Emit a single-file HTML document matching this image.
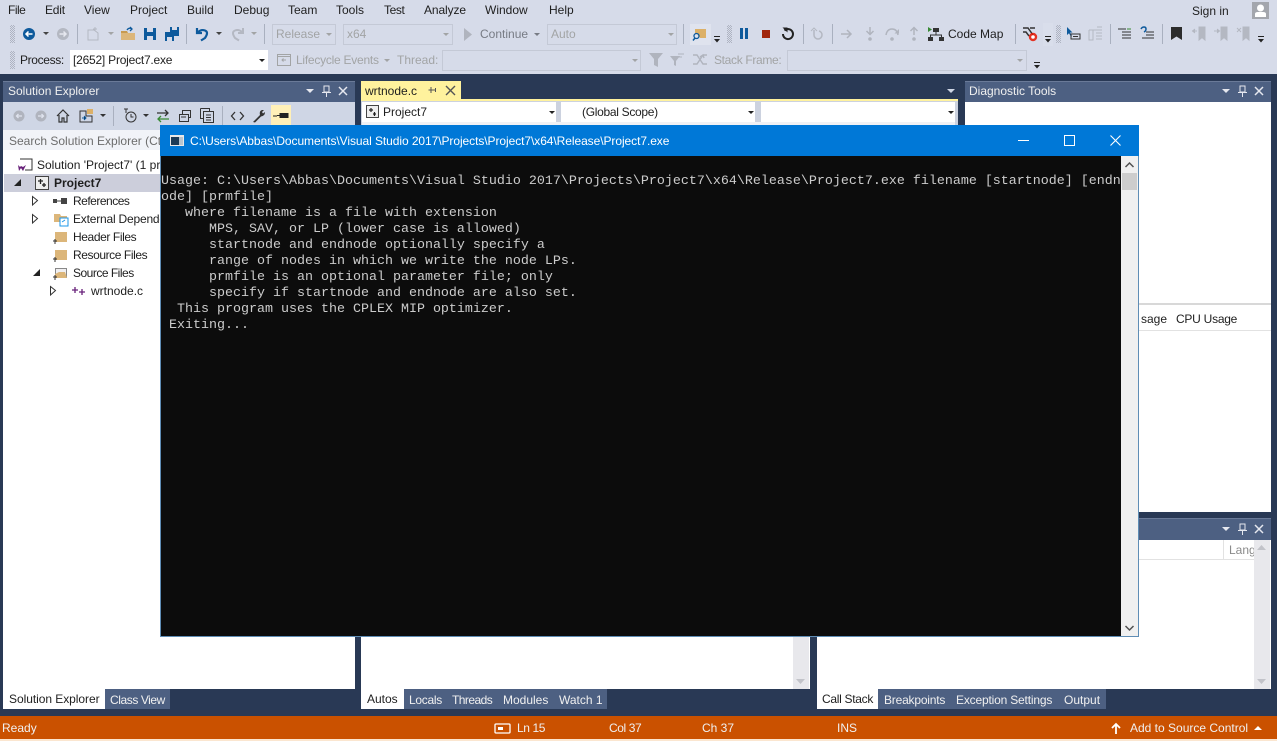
<!DOCTYPE html>
<html><head><meta charset="utf-8"><title>Visual Studio</title>
<style>
html,body{margin:0;padding:0;background:#293955;}
#r{position:relative;width:1277px;height:741px;overflow:hidden;background:#293955;font:12px/16px "Liberation Sans",sans-serif;color:#1e1e1e;}
.b{position:absolute;}
.t{position:absolute;white-space:nowrap;line-height:16px;}
.g{color:#a2a4a5;}
.w{color:#fff;}
.l{color:#f0f0f0;}
.c{position:absolute;background:#d6dbe9;border:1px solid #c4c9d6;box-sizing:border-box;}
.sep{position:absolute;width:1px;height:20px;background:#a9b0bf;}
.grip{position:absolute;width:5px;background-image:conic-gradient(#aeb3c1 25%,transparent 0 50%,#aeb3c1 0 75%,transparent 0);background-size:2px 2px;}
.title{position:absolute;background:#4d6082;height:21px;border-top:1px solid #6a7a98;box-sizing:border-box;}
.tab{position:absolute;top:689px;height:20px;background:#4d6082;}
.tabw{position:absolute;top:689px;height:20px;background:#fff;}
svg{position:absolute;overflow:visible;}
pre{position:absolute;margin:0;font:13.33px/16px "Liberation Mono",monospace;color:#cccccc;white-space:pre;}
</style></head><body><div id="r">

<!-- chrome -->
<div class="b" style="left:0;top:0;width:1277px;height:74px;background:#d6dbe9"></div>

<!-- menu -->
<span class="t" style="left:8px;top:2px;letter-spacing:-.5px">File</span>
<span class="t" style="left:45px;top:2px;letter-spacing:-.2px">Edit</span>
<span class="t" style="left:84px;top:2px">View</span>
<span class="t" style="left:130px;top:2px">Project</span>
<span class="t" style="left:187px;top:2px">Build</span>
<span class="t" style="left:234px;top:2px">Debug</span>
<span class="t" style="left:288px;top:2px">Team</span>
<span class="t" style="left:336px;top:2px">Tools</span>
<span class="t" style="left:384px;top:2px;letter-spacing:-.4px">Test</span>
<span class="t" style="left:424px;top:2px;letter-spacing:-.1px">Analyze</span>
<span class="t" style="left:485px;top:2px">Window</span>
<span class="t" style="left:549px;top:2px">Help</span>
<span class="t" style="left:1192px;top:3px">Sign in</span>
<div class="b" style="left:1252px;top:2px;width:17px;height:17px;background:#a3a6ad"></div>
<svg style="left:1252px;top:2px" width="17" height="17"><circle cx="8.5" cy="6" r="3.5" fill="#fff"/><path d="M3 15v-3q0-2 3-2h5q3 0 3 2v3z" fill="#fff"/></svg>

<!-- toolbar 1 -->
<div class="grip" style="left:10px;top:25px;height:18px"></div>
<svg style="left:22px;top:27px" width="14" height="14"><circle cx="7" cy="7" r="6" fill="#0e5a9c"/><path d="M10.500 7H4M6.500 4.500L4 7l2.500 2.500" stroke="#fff" stroke-width="1.500" fill="none"/></svg>
<svg style="left:43px;top:32px" width="7" height="4"><path d="M0 0h6L3 3z" fill="#444"/></svg>
<svg style="left:56px;top:27px" width="14" height="14"><circle cx="7" cy="7" r="6" fill="#b4b8c2"/><path d="M3.500 7H10M7.500 4.500L10 7l-2.500 2.500" stroke="#e6e8ef" stroke-width="1.500" fill="none"/></svg>
<div class="sep" style="left:77px;top:24px"></div>
<svg style="left:87px;top:27px" width="13" height="14"><path d="M1 3h6l4 3v7H1z" fill="none" stroke="#b4b8c2"/><path d="M8 0v4M6 2h4" stroke="#b4b8c2"/></svg>
<svg style="left:108px;top:32px" width="7" height="4"><path d="M0 0h6L3 3z" fill="#a2a4a5"/></svg>
<svg style="left:121px;top:27px" width="15" height="14"><path d="M0 6h14v7H0z" fill="#dcb67a"/><path d="M0 6V4h6l1 2z" fill="#c89a50"/><path d="M6 3q2-3 5-1M9 0l2 2-2 2" stroke="#0e5a9c" stroke-width="1.300" fill="none"/></svg>
<svg style="left:144px;top:28px" width="12" height="12"><path d="M0 0h12v12H0z" fill="#0e5a9c"/><path d="M3 0h6v4H3zM3 8h6v4H3z" fill="#d6dbe9"/></svg>
<svg style="left:165px;top:27px" width="14" height="14"><path d="M0 5h9v9H0z" fill="#0e5a9c"/><path d="M5 0h9v9H5z" fill="#0e5a9c"/><path d="M7 0h5v3H7zM2 10h5v4H2z" fill="#d6dbe9"/></svg>
<div class="sep" style="left:186px;top:24px"></div>
<svg style="left:195px;top:27px" width="14" height="14"><path d="M2 1v5h5M2.500 5.500Q6 2 10 3.500T10 11L6 13.500" stroke="#0e5a9c" stroke-width="2.200" fill="none"/></svg>
<svg style="left:216px;top:32px" width="7" height="4"><path d="M0 0h6L3 3z" fill="#444"/></svg>
<svg style="left:231px;top:27px" width="14" height="14"><path d="M12 1v5H7M11.500 5.500Q8 2 4 3.500T4 11l4 2.500" stroke="#b4b8c2" stroke-width="2" fill="none"/></svg>
<svg style="left:251px;top:32px" width="7" height="4"><path d="M0 0h6L3 3z" fill="#a2a4a5"/></svg>
<div class="sep" style="left:264px;top:24px"></div>
<div class="c" style="left:272px;top:24px;width:64px;height:21px"></div>
<span class="t g" style="left:276px;top:26px">Release</span>
<svg style="left:326px;top:33px" width="7" height="4"><path d="M0 0h6L3 3z" fill="#a2a4a5"/></svg>
<div class="c" style="left:343px;top:24px;width:110px;height:21px"></div>
<span class="t g" style="left:347px;top:26px">x64</span>
<svg style="left:443px;top:33px" width="7" height="4"><path d="M0 0h6L3 3z" fill="#a2a4a5"/></svg>
<svg style="left:463px;top:28px" width="10" height="13"><path d="M1 0l8 6.500-8 6.500z" fill="#b0b4be"/></svg>
<span class="t" style="left:480px;top:26px;color:#777b84">Continue</span>
<svg style="left:534px;top:33px" width="7" height="4"><path d="M0 0h6L3 3z" fill="#777b84"/></svg>
<div class="c" style="left:547px;top:24px;width:130px;height:21px"></div>
<span class="t g" style="left:551px;top:26px">Auto</span>
<svg style="left:668px;top:33px" width="7" height="4"><path d="M0 0h6L3 3z" fill="#a2a4a5"/></svg>
<div class="sep" style="left:683px;top:24px"></div>
<div class="b" style="left:690px;top:24px;width:21px;height:21px;background:#dfe3ee"></div>
<svg style="left:692px;top:27px" width="15" height="14"><path d="M3 2h11v9H8L5 7H3z" fill="#dcb067"/><circle cx="4.500" cy="9" r="2.500" fill="none" stroke="#0e5a9c" stroke-width="1.300"/><path d="M3 11l-2 2.500" stroke="#0e5a9c" stroke-width="1.500"/></svg>
<svg style="left:713px;top:36px" width="8" height="7"><path d="M1 .5h6" stroke="#222"/><path d="M1 3h6L4 6.500z" fill="#222"/></svg>
<div class="grip" style="left:727px;top:25px;height:18px"></div>
<svg style="left:739px;top:28px" width="10" height="11"><path d="M1 0h3v11H1zM6 0h3v11H6z" fill="#0e5a9c"/></svg>
<div class="b" style="left:762px;top:30px;width:8px;height:8px;background:#a1260d"></div>
<svg style="left:781px;top:27px" width="14" height="14"><path d="M3.500 3.500A5 5 0 1 1 2 7" stroke="#222" stroke-width="2" fill="none"/><path d="M1.500 0.500h5v5z" fill="#222"/></svg>
<div class="sep" style="left:803px;top:24px"></div>
<svg style="left:811px;top:27px" width="14" height="14"><path d="M3 3v5a4 4 0 0 0 8 0 4 4 0 0 0-3-4" stroke="#b4b8c2" stroke-width="1.500" fill="none"/><path d="M0 4l3-3 3 3" stroke="#b4b8c2" fill="none"/></svg>
<div class="sep" style="left:832px;top:24px"></div>
<svg style="left:841px;top:28px" width="12" height="12"><path d="M0 6h10M6 2l4 4-4 4" stroke="#b0b4be" stroke-width="1.500" fill="none"/></svg>
<svg style="left:864px;top:27px" width="12" height="14"><path d="M6 0v7M2.500 4L6 7.500 9.500 4" stroke="#b0b4be" stroke-width="1.500" fill="none"/><circle cx="6" cy="12" r="1.800" fill="#b0b4be"/></svg>
<svg style="left:885px;top:27px" width="14" height="14"><path d="M1 8Q2 2 7 2t6 6" stroke="#b0b4be" stroke-width="1.500" fill="none"/><path d="M9.500 6.500h4.500V2" fill="#b0b4be"/><circle cx="7" cy="12" r="1.800" fill="#b0b4be"/></svg>
<svg style="left:908px;top:27px" width="12" height="14"><path d="M6 8V1M2.500 4L6 .5 9.500 4" stroke="#b0b4be" stroke-width="1.500" fill="none"/><circle cx="6" cy="12" r="1.800" fill="#b0b4be"/></svg>
<svg style="left:928px;top:27px" width="16" height="14"><path d="M5 1h6v4H5zM0 10h5v4H0zM11 10h5v4h-5z" fill="#333"/><path d="M8 5v3M2.500 10V8h11v2" stroke="#333" fill="none"/><path d="M0 0l4 2.500L0 5z" fill="#388a34"/></svg>
<span class="t" style="left:948px;top:26px">Code Map</span>
<div class="sep" style="left:1015px;top:24px"></div>
<svg style="left:1022px;top:26px" width="16" height="16"><path d="M1 2h5l5 7M1 6h3l3 4M8 2h5" stroke="#333" stroke-width="1.500" fill="none"/><circle cx="11" cy="11" r="4.200" fill="#e51400" opacity=".85"/><circle cx="11" cy="11" r="1.800" fill="#fff"/></svg>
<div class="b" style="left:1043px;top:23px;width:10px;height:23px;background:#dfe3ee;opacity:.4"></div>
<svg style="left:1044px;top:36px" width="8" height="7"><path d="M1 .5h6" stroke="#222"/><path d="M1 3h6L4 6.500z" fill="#222"/></svg>
<div class="grip" style="left:1056px;top:25px;height:18px"></div>
<svg style="left:1066px;top:27px" width="15" height="14"><path d="M1 0v8l2-1.800 2 3.500 1-.6L4 5.500h2.500z" fill="#0e5a9c"/><path d="M5 7h9v5H5zM7 9.500h5" stroke="#333" fill="none"/></svg>
<svg style="left:1088px;top:27px" width="15" height="14"><path d="M1 3h13M1 3v10h4V3M8 6h6M8 9h6M8 12h6M9 0h5" stroke="#b4b8c2" fill="none"/></svg>
<div class="sep" style="left:1110px;top:24px"></div>
<svg style="left:1118px;top:28px" width="14" height="12"><path d="M0 1h8M4 4h9M4 7h9M4 10h9" stroke="#333" fill="none"/><path d="M9 1h4" stroke="#388a34"/></svg>
<svg style="left:1140px;top:27px" width="14" height="13"><path d="M1 2q1-2 3-2t2 2-2 3" stroke="#0e5a9c" stroke-width="1.500" fill="none"/><path d="M6 5h8M6 8h8M2 11h12" stroke="#333" fill="none"/></svg>
<div class="sep" style="left:1162px;top:24px"></div>
<svg style="left:1171px;top:27px" width="11" height="13"><path d="M0 0h11v13L5.500 9.500 0 13z" fill="#2c2c2c"/></svg>
<svg style="left:1192px;top:27px" width="14" height="13"><path d="M7 0h6v13l-3-2.500L7 13zM0 4h5M3 2L.5 4 3 6" stroke="#b4b8c2" fill="#b4b8c2"/></svg>
<svg style="left:1214px;top:27px" width="14" height="13"><path d="M7 0h6v13l-3-2.500L7 13zM0 4h5M3 2l2.500 2L3 6" stroke="#b4b8c2" fill="#b4b8c2"/></svg>
<svg style="left:1236px;top:27px" width="14" height="13"><path d="M7 0h6v13l-3-2.500L7 13zM1 1l4 4M5 1L1 5" stroke="#b4b8c2" fill="#b4b8c2"/></svg>
<svg style="left:1257px;top:36px" width="8" height="7"><path d="M1 .5h6" stroke="#222"/><path d="M1 3h6L4 6.500z" fill="#222"/></svg>

<!-- toolbar 2 -->
<div class="grip" style="left:10px;top:51px;height:18px"></div>
<span class="t" style="left:20px;top:52px;letter-spacing:-.35px">Process:</span>
<div class="b" style="left:70px;top:50px;width:198px;height:20px;background:#fff"></div>
<span class="t" style="left:73px;top:52px;letter-spacing:-.22px">[2652] Project7.exe</span>
<svg style="left:259px;top:59px" width="7" height="4"><path d="M0 0h6L3 3z" fill="#222"/></svg>
<svg style="left:277px;top:54px" width="14" height="12"><path d="M.5.500h13v11H.5z" fill="none" stroke="#a2a4a5"/><path d="M.5 2.500h13M9 6H5M6.500 4.500L5 6l1.500 1.500" stroke="#a2a4a5" fill="none"/></svg>
<span class="t g" style="left:296px;top:52px;letter-spacing:-.25px">Lifecycle Events</span>
<svg style="left:384px;top:59px" width="7" height="4"><path d="M0 0h6L3 3z" fill="#a2a4a5"/></svg>
<span class="t g" style="left:397px;top:52px">Thread:</span>
<div class="c" style="left:442px;top:50px;width:199px;height:21px"></div>
<svg style="left:632px;top:59px" width="7" height="4"><path d="M0 0h6L3 3z" fill="#a2a4a5"/></svg>
<svg style="left:649px;top:53px" width="14" height="14"><path d="M0 0h14L9 6v8l-4-2V6z" fill="#b0b4be"/></svg>
<svg style="left:670px;top:53px" width="14" height="14"><path d="M0 3h10L6 8v5l-2-1V8z" fill="#b0b4be"/><path d="M8 1h6M8 4h4" stroke="#b0b4be"/></svg>
<svg style="left:693px;top:54px" width="14" height="12"><path d="M0 1h4l6 9h4M0 10h4l6-9h4M7 3l3-2 1 3" stroke="#b0b4be" stroke-width="1.400" fill="none"/></svg>
<span class="t g" style="left:714px;top:52px;letter-spacing:-.33px">Stack Frame:</span>
<div class="c" style="left:787px;top:50px;width:240px;height:21px"></div>
<svg style="left:1017px;top:59px" width="7" height="4"><path d="M0 0h6L3 3z" fill="#a2a4a5"/></svg>
<svg style="left:1033px;top:62px" width="8" height="7"><path d="M1 .5h6" stroke="#222"/><path d="M1 3h6L4 6.500z" fill="#222"/></svg>

<!-- Solution Explorer panel -->
<div class="b" style="left:3px;top:81px;width:352px;height:608px;background:#fff"></div>
<div class="title" style="left:3px;top:81px;width:352px"></div>
<span class="t l" style="left:8px;top:83px">Solution Explorer</span>
<svg style="left:306px;top:89px" width="8" height="5"><path d="M0 0h8L4 4z" fill="#e6e8ef"/></svg>
<svg style="left:322px;top:85px" width="9" height="13"><path d="M2 1h5v6H2zM0 7.500h9M4.500 8v4" stroke="#e6e8ef" fill="none"/></svg>
<svg style="left:338px;top:86px" width="10" height="10"><path d="M1 1l8 8M9 1L1 9" stroke="#e6e8ef" stroke-width="1.500"/></svg>

<div class="b" style="left:3px;top:102px;width:352px;height:28px;background:#cfd6e5"></div>
<svg style="left:13px;top:110px" width="12" height="12"><circle cx="6" cy="6" r="5.500" fill="#b0b4be"/><path d="M9 6H3.500M5.500 4L3.500 6l2 2" stroke="#dfe3ee" stroke-width="1.300" fill="none"/></svg>
<svg style="left:35px;top:110px" width="12" height="12"><circle cx="6" cy="6" r="5.500" fill="#b0b4be"/><path d="M3 6h5.500M6.500 4l2 2-2 2" stroke="#dfe3ee" stroke-width="1.300" fill="none"/></svg>
<svg style="left:56px;top:109px" width="14" height="14"><path d="M1 7l6-6 6 6M3 6v7h3V9h2v4h3V6" stroke="#333" stroke-width="1.200" fill="none"/></svg>
<svg style="left:79px;top:108px" width="15" height="15"><path d="M1 3h6v5h6v6H1z" fill="none" stroke="#333"/><path d="M8 1h6v5H8z" fill="#dcb067"/><path d="M3 10h4M5 8l2 2-2 2" stroke="#0e5a9c"/></svg>
<svg style="left:100px;top:114px" width="7" height="4"><path d="M0 0h6L3 3z" fill="#333"/></svg>
<div class="sep" style="left:113px;top:106px"></div>
<svg style="left:123px;top:108px" width="15" height="15"><circle cx="8" cy="9" r="5" fill="none" stroke="#333"/><path d="M8 6v3h2.500M1 1h4M3 1v4" stroke="#333" fill="none"/></svg>
<svg style="left:143px;top:114px" width="7" height="4"><path d="M0 0h6L3 3z" fill="#333"/></svg>
<svg style="left:156px;top:109px" width="14" height="14"><path d="M1 4h11M9 1l3 3-3 3" stroke="#333" stroke-width="1.300" fill="none"/><path d="M13 10H2M5 7l-3 3 3 3" stroke="#388a34" stroke-width="1.300" fill="none"/></svg>
<svg style="left:179px;top:110px" width="12" height="12"><path d="M3 4h6v7H0V4zM3 4V0h8v7H9" stroke="#333" fill="none" transform="translate(.5 .5)"/><path d="M2 7h5" stroke="#333"/></svg>
<svg style="left:200px;top:108px" width="14" height="15"><path d="M3.500 3.500h10v11h-10zM.5 .5h9v3M.5 .5v10h3M6 7h5M6 9.500h5M6 12h5" stroke="#333" fill="none"/></svg>
<div class="sep" style="left:222px;top:106px"></div>
<svg style="left:231px;top:111px" width="13" height="10"><path d="M4 1L0.500 5 4 9M9 1l3.500 4L9 9" stroke="#333" stroke-width="1.300" fill="none"/></svg>
<svg style="left:252px;top:109px" width="14" height="14"><path d="M1 13l7-7Q7 2 10 1l2 0-2 2 1 1.500L13 3q0 4-4 4.500L3 13.500z" fill="#333"/></svg>
<div class="b" style="left:271px;top:105px;width:20px;height:22px;background:#fff0b8"></div>
<svg style="left:273px;top:112px" width="16" height="8"><path d="M0 4h4v0M4 3.500h11M7 1.500h8v4H7z" stroke="#222" fill="#222"/></svg>

<div class="b" style="left:3px;top:130px;width:352px;height:20px;background:#f1f3f8"></div>
<span class="t" style="left:9px;top:133px;color:#6d6d6d">Search Solution Explorer (Ctrl+;)</span>

<svg style="left:18px;top:158px" width="15" height="14"><path d="M2 1h12v11H7" fill="none" stroke="#333"/><path d="M0 7l1 6 2-3 2 3 3-6-3 2-2-1-1 1z" fill="#68217a"/></svg>
<span class="t" style="left:37px;top:157px">Solution 'Project7' (1 project)</span>
<div class="b" style="left:4px;top:174px;width:351px;height:18px;background:#ccceDb"></div>
<svg style="left:14px;top:179px" width="8" height="8"><path d="M7 0v7H0z" fill="#222"/></svg>
<svg style="left:35px;top:176px" width="14" height="14"><rect x=".5" y=".5" width="13" height="13" fill="#eee" stroke="#444"/><path d="M3 5h5M5.500 3v5M7 9h4M9 7v4" stroke="#222" stroke-width="1.300"/></svg>
<span class="t" style="left:54px;top:175px;font-weight:bold">Project7</span>
<svg style="left:32px;top:196px" width="7" height="10"><path d="M.5.500l5 4-5 4.500z" fill="none" stroke="#333"/></svg>
<svg style="left:53px;top:198px" width="14" height="6"><path d="M0 1h4v4H0z" fill="#444"/><path d="M4 3h4" stroke="#444"/><path d="M8 0h6v6H8z" fill="#444"/></svg>
<span class="t" style="left:73px;top:193px;letter-spacing:-.5px">References</span>
<svg style="left:32px;top:214px" width="7" height="10"><path d="M.5.500l5 4-5 4.500z" fill="none" stroke="#333"/></svg>
<svg style="left:54px;top:212px" width="14" height="14"><path d="M0 2h6l1 2h6v6H0z" fill="#dcb67a"/><path d="M6 6h8v8H6z" fill="#fff" stroke="#1c97ea"/><path d="M8 10l3-2" stroke="#1c97ea"/></svg>
<span class="t" style="left:73px;top:211px;letter-spacing:-.2px">External Dependencies</span>
<svg style="left:53px;top:231px" width="14" height="13"><path d="M2 1h12v10H2z" fill="#dcb67a"/><path d="M0 10h4M2 8v5" stroke="#333"/></svg>
<span class="t" style="left:73px;top:229px;letter-spacing:-.4px">Header Files</span>
<svg style="left:53px;top:249px" width="14" height="13"><path d="M2 1h12v10H2z" fill="#dcb67a"/><path d="M0 10h4M2 8v5" stroke="#333"/></svg>
<span class="t" style="left:73px;top:247px;letter-spacing:-.42px">Resource Files</span>
<svg style="left:33px;top:269px" width="8" height="8"><path d="M7 0v7H0z" fill="#222"/></svg>
<svg style="left:53px;top:267px" width="14" height="13"><path d="M2.500 1.500h11v9h-11z" fill="#f0eff1" stroke="#888"/><path d="M2 7l4-2h6l2 6H2z" fill="#dcb67a"/><path d="M0 10h4M2 8v5" stroke="#333"/></svg>
<span class="t" style="left:73px;top:265px;letter-spacing:-.5px">Source Files</span>
<svg style="left:50px;top:286px" width="7" height="10"><path d="M.5.500l5 4-5 4.500z" fill="none" stroke="#333"/></svg>
<svg style="left:72px;top:287px" width="13" height="9"><path d="M0 3h6M3 0v6" stroke="#68217a" stroke-width="1.300"/><path d="M7 5h6M10 2v6" stroke="#68217a" stroke-width="1.300"/></svg>
<span class="t" style="left:91px;top:283px">wrtnode.c</span>

<!-- bottom tabs left -->
<div class="tabw" style="left:3px;width:102px"></div>
<span class="t" style="left:9px;top:691px;letter-spacing:-.05px">Solution Explorer</span>
<div class="tab" style="left:105px;width:65px"></div>
<span class="t l" style="left:110px;top:692px;letter-spacing:-.42px">Class View</span>

<!-- Editor -->
<div class="b" style="left:361px;top:81px;width:100px;height:19px;background:#fff29d"></div>
<span class="t" style="left:365px;top:83px">wrtnode.c</span>
<svg style="left:428px;top:86px" width="9" height="9"><path d="M3 1v6M3 4h5M.5 4h2M7.500 2v4" stroke="#555" fill="none"/></svg>
<svg style="left:446px;top:86px" width="9" height="9"><path d="M0 0l9 9M9 0L0 9" stroke="#555" stroke-width="1.400"/></svg>
<svg style="left:947px;top:89px" width="8" height="5"><path d="M0 0h8L4 4z" fill="#cfd6e5"/></svg>
<div class="b" style="left:361px;top:99px;width:597px;height:2px;background:#fff29d"></div>
<div class="b" style="left:361px;top:101px;width:597px;height:24px;background:#ccd2df"></div>
<div class="b" style="left:362px;top:102px;width:194px;height:20px;background:#fff"></div>
<div class="b" style="left:561px;top:102px;width:194px;height:20px;background:#fff"></div>
<div class="b" style="left:761px;top:102px;width:194px;height:20px;background:#fff"></div>
<div class="b" style="left:362px;top:122px;width:593px;height:3px;background:#f0f1f5"></div>
<svg style="left:366px;top:105px" width="13" height="13"><rect x=".5" y=".5" width="12" height="12" fill="#eee" stroke="#444"/><path d="M3 5h4M5 3v4M7 9h3M8.500 7v4" stroke="#222" stroke-width="1.200"/></svg>
<span class="t" style="left:383px;top:104px">Project7</span>
<svg style="left:549px;top:111px" width="7" height="4"><path d="M0 0h6L3 3z" fill="#222"/></svg>
<span class="t" style="left:582px;top:104px;letter-spacing:-.3px">(Global Scope)</span>
<svg style="left:748px;top:111px" width="7" height="4"><path d="M0 0h6L3 3z" fill="#222"/></svg>
<svg style="left:948px;top:111px" width="7" height="4"><path d="M0 0h6L3 3z" fill="#222"/></svg>

<!-- Autos -->
<div class="b" style="left:361px;top:630px;width:449px;height:59px;background:#fff"></div>
<div class="b" style="left:793px;top:630px;width:16px;height:59px;background:#e8e8ec"></div>
<svg style="left:796px;top:679px" width="10" height="6"><path d="M0 0h9L4.500 5z" fill="#c2c3c9"/></svg>
<div class="tabw" style="left:361px;width:43px"></div>
<span class="t" style="left:367px;top:691px">Autos</span>
<div class="tab" style="left:404px;width:203px"></div>
<span class="t l" style="left:409px;top:692px;letter-spacing:-.3px">Locals</span>
<span class="t l" style="left:452px;top:692px;letter-spacing:-.55px">Threads</span>
<span class="t l" style="left:503px;top:692px">Modules</span>
<span class="t l" style="left:559px;top:692px">Watch 1</span>

<!-- Call stack -->
<div class="b" style="left:817px;top:630px;width:454px;height:59px;background:#fff"></div>
<div class="tabw" style="left:817px;width:61px"></div>
<span class="t" style="left:822px;top:691px;letter-spacing:-.3px">Call Stack</span>
<div class="tab" style="left:878px;width:228px"></div>
<span class="t l" style="left:884px;top:692px;letter-spacing:-.2px">Breakpoints</span>
<span class="t l" style="left:956px;top:692px;letter-spacing:-.18px">Exception Settings</span>
<span class="t l" style="left:1064px;top:692px">Output</span>

<!-- Diagnostic -->
<div class="b" style="left:965px;top:81px;width:306px;height:431px;background:#fff"></div>
<div class="title" style="left:965px;top:81px;width:306px"></div>
<span class="t l" style="left:969px;top:83px">Diagnostic Tools</span>
<svg style="left:1222px;top:89px" width="8" height="5"><path d="M0 0h8L4 4z" fill="#e6e8ef"/></svg>
<svg style="left:1238px;top:85px" width="9" height="13"><path d="M2 1h5v6H2zM0 7.500h9M4.500 8v4" stroke="#e6e8ef" fill="none"/></svg>
<svg style="left:1254px;top:86px" width="10" height="10"><path d="M1 1l8 8M9 1L1 9" stroke="#e6e8ef" stroke-width="1.500"/></svg>
<div class="b" style="left:1139px;top:303px;width:132px;height:2px;background:#d8d8d8"></div>
<div class="b" style="left:1139px;top:330px;width:132px;height:1px;background:#e2e2e2"></div>
<span class="t" style="left:1141px;top:311px">sage</span>
<span class="t" style="left:1176px;top:311px;letter-spacing:-.25px">CPU Usage</span>

<!-- Panel below diagnostic -->
<div class="title" style="left:1139px;top:518px;width:132px;height:22px"></div>
<svg style="left:1222px;top:527px" width="8" height="5"><path d="M0 0h8L4 4z" fill="#e6e8ef"/></svg>
<svg style="left:1238px;top:523px" width="9" height="13"><path d="M2 1h5v6H2zM0 7.500h9M4.500 8v4" stroke="#e6e8ef" fill="none"/></svg>
<svg style="left:1254px;top:524px" width="10" height="10"><path d="M1 1l8 8M9 1L1 9" stroke="#e6e8ef" stroke-width="1.500"/></svg>
<div class="b" style="left:1139px;top:540px;width:132px;height:149px;background:#fff"></div>
<div class="b" style="left:1139px;top:559px;width:115px;height:1px;background:#e2e2e2"></div>
<div class="b" style="left:1223px;top:540px;width:1px;height:19px;background:#e2e2e2"></div>
<span class="t" style="left:1229px;top:542px;color:#8a8a8a;width:25px;overflow:hidden">Language</span>
<div class="b" style="left:1254px;top:540px;width:16px;height:149px;background:#e8e8ec"></div>
<svg style="left:1257px;top:545px" width="10" height="6"><path d="M0 5h9L4.500 0z" fill="#c2c3c9"/></svg>
<svg style="left:1257px;top:679px" width="10" height="6"><path d="M0 0h9L4.500 5z" fill="#c2c3c9"/></svg>

<!-- Status bar -->
<div class="b" style="left:0;top:716px;width:1277px;height:23px;background:#ca5100"></div>
<div class="b" style="left:0;top:739px;width:1277px;height:2px;background:#fbe6d0"></div>
<span class="t l" style="left:2px;top:720px">Ready</span>
<svg style="left:494px;top:723px" width="17" height="11"><rect x="1" y="1" width="15" height="9" rx="1" fill="none" stroke="#fff" stroke-width="1.300"/><path d="M4 4h5v3H4z" fill="#fff"/></svg>
<span class="t l" style="left:517px;top:720px;letter-spacing:-.4px">Ln 15</span>
<span class="t l" style="left:609px;top:720px;letter-spacing:-.4px">Col 37</span>
<span class="t l" style="left:702px;top:720px">Ch 37</span>
<span class="t l" style="left:837px;top:720px">INS</span>
<svg style="left:1111px;top:722px" width="10" height="12"><path d="M5 12V2M1 6l4-4 4 4" stroke="#fff" stroke-width="1.800" fill="none"/></svg>
<span class="t l" style="left:1130px;top:720px">Add to Source Control</span>
<svg style="left:1254px;top:726px" width="8" height="5"><path d="M0 4h8L4 0z" fill="#fff"/></svg>

<!-- Console window -->
<div class="b" style="left:160px;top:125px;width:979px;height:31px;background:#0078d7"></div>
<div class="b" style="left:160px;top:156px;width:979px;height:481px;background:#5f8db5"></div>
<div class="b" style="left:161px;top:156px;width:960px;height:480px;background:#0c0c0c"></div>
<div class="b" style="left:1121px;top:156px;width:17px;height:480px;background:#f0f0f0"></div>
<div class="b" style="left:1122px;top:173px;width:15px;height:17px;background:#cdcdcd"></div>
<svg style="left:1125px;top:162px" width="9" height="6"><path d="M.5 5L4.500 1l4 4" stroke="#505050" stroke-width="1.500" fill="none"/></svg>
<svg style="left:1125px;top:625px" width="9" height="6"><path d="M.5 1l4 4 4-4" stroke="#505050" stroke-width="1.500" fill="none"/></svg>
<svg style="left:170px;top:135px" width="14" height="11"><rect width="14" height="11" fill="#e8e8e8"/><rect x="1" y="2" width="8" height="8" fill="#1b3a57"/><rect x="9" y="2" width="4" height="8" fill="#b8c4cf"/></svg>
<span class="t w" style="left:190px;top:133px;letter-spacing:-.07px">C:\Users\Abbas\Documents\Visual Studio 2017\Projects\Project7\x64\Release\Project7.exe</span>
<div class="b" style="left:1018px;top:140px;width:11px;height:1px;background:#fff"></div>
<div class="b" style="left:1064px;top:135px;width:9px;height:9px;border:1px solid #fff"></div>
<svg style="left:1110px;top:135px" width="11" height="11"><path d="M.5.500l10 10M10.500.500l-10 10" stroke="#fff" stroke-width="1.100"/></svg>
<div style="position:absolute;left:161px;top:156px;width:960px;height:480px;overflow:hidden"><pre style="left:0;top:18px">Usage: C:\Users\Abbas\Documents\Visual Studio 2017\Projects\Project7\x64\Release\Project7.exe filename [startnode] [endn
ode] [prmfile]
   where filename is a file with extension
      MPS, SAV, or LP (lower case is allowed)
      startnode and endnode optionally specify a
      range of nodes in which we write the node LPs.
      prmfile is an optional parameter file; only
      specify if startnode and endnode are also set.
  This program uses the CPLEX MIP optimizer.
 Exiting...</pre></div>

</div></body></html>
